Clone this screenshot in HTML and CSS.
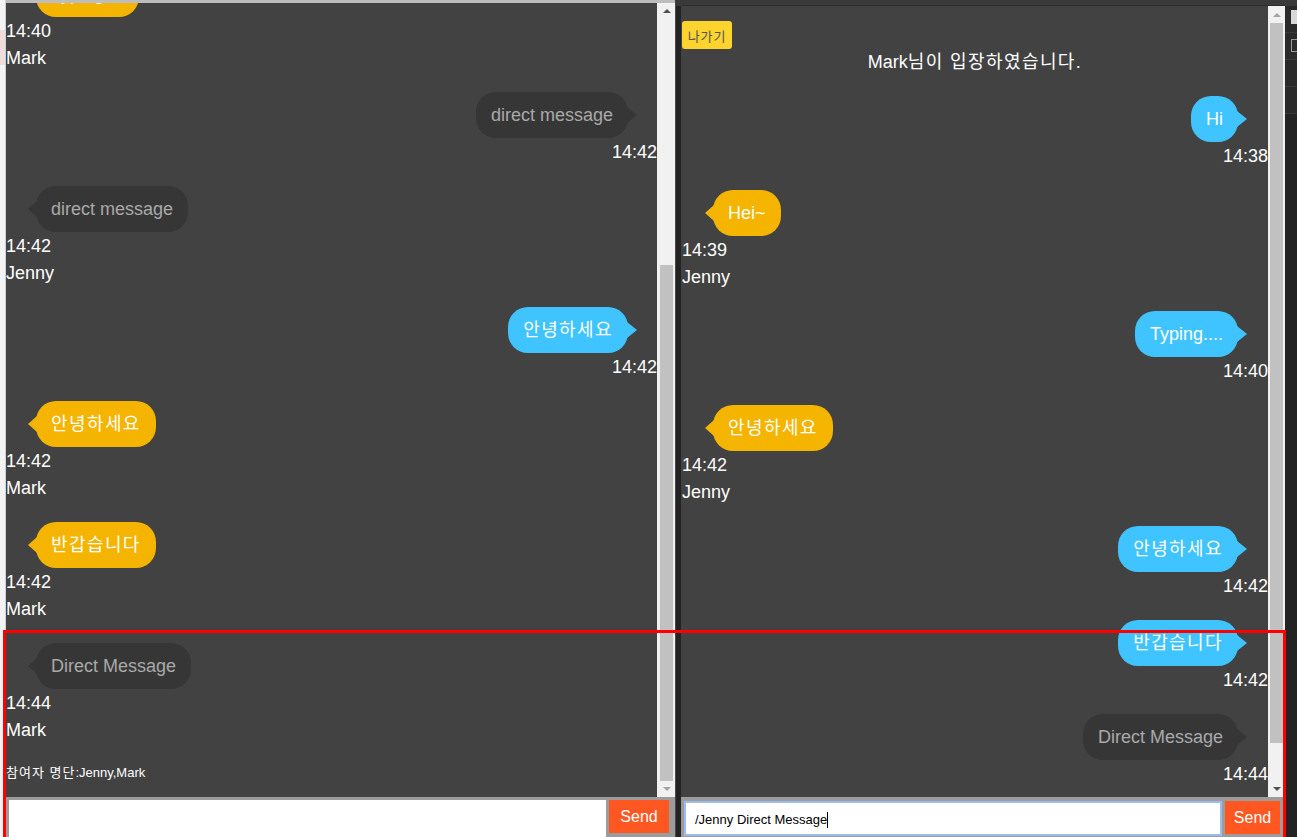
FILE: index.html
```html
<!DOCTYPE html>
<html lang="ko">
<head>
<meta charset="utf-8">
<title>Chat</title>
<link rel="stylesheet" href="styles.css">
</head>
<body>
<div class="screen">
  <div class="edge-left"><div class="edge-mark"></div></div>

  <section class="window window-left">
    <div class="pane">
      <div class="chat chat-left">
        <ul class="messages scrolled">
          <li class="msg other"><span class="bubble yellow">Typing....</span><div class="meta">14:40</div><div class="meta">Mark</div></li>
          <li class="msg mine"><span class="bubble gray">direct message</span><div class="meta">14:42</div></li>
          <li class="msg other"><span class="bubble gray">direct message</span><div class="meta">14:42</div><div class="meta">Jenny</div></li>
          <li class="msg mine"><span class="bubble blue"><span class="ko">안녕하세요</span></span><div class="meta">14:42</div></li>
          <li class="msg other"><span class="bubble yellow"><span class="ko">안녕하세요</span></span><div class="meta">14:42</div><div class="meta">Mark</div></li>
          <li class="msg other"><span class="bubble yellow"><span class="ko">반갑습니다</span></span><div class="meta">14:42</div><div class="meta">Mark</div></li>
          <li class="msg other"><span class="bubble gray">Direct Message</span><div class="meta">14:44</div><div class="meta">Mark</div></li>
        </ul>
        <p class="members"><span class="ko-sm">참여자 명단</span>:Jenny,Mark</p>
      </div>
      <div class="scrollbar scrollbar-left">
        <div class="arrow up dark"></div>
        <div class="track"><div class="thumb thumb-left"></div></div>
        <div class="arrow down"></div>
      </div>
    </div>
    <div class="composer composer-left">
      <div class="field"></div>
      <button class="send" type="button">Send</button>
    </div>
  </section>

  <div class="divider"></div>

  <section class="window window-right">
    <div class="topbar"></div>
    <div class="pane">
      <div class="chat chat-right">
        <button class="leave" type="button">나가기</button>
        <div class="notice">Mark<span class="ko">님이 입장하였습니다.</span></div>
        <ul class="messages">
          <li class="msg mine"><span class="bubble blue">Hi</span><div class="meta">14:38</div></li>
          <li class="msg other"><span class="bubble yellow">Hei~</span><div class="meta">14:39</div><div class="meta">Jenny</div></li>
          <li class="msg mine"><span class="bubble blue">Typing....</span><div class="meta">14:40</div></li>
          <li class="msg other"><span class="bubble yellow"><span class="ko">안녕하세요</span></span><div class="meta">14:42</div><div class="meta">Jenny</div></li>
          <li class="msg mine"><span class="bubble blue"><span class="ko">안녕하세요</span></span><div class="meta">14:42</div></li>
          <li class="msg mine"><span class="bubble blue"><span class="ko">반갑습니다</span></span><div class="meta">14:42</div></li>
          <li class="msg mine"><span class="bubble gray">Direct Message</span><div class="meta">14:44</div></li>
        </ul>
      </div>
      <div class="scrollbar scrollbar-right">
        <div class="arrow up"></div>
        <div class="track"><div class="thumb thumb-right"></div></div>
        <div class="arrow down dark"></div>
      </div>
    </div>
    <div class="composer composer-right">
      <div class="field focused">/Jenny Direct Message<span class="caret"></span></div>
      <button class="send" type="button">Send</button>
    </div>
  </section>

  <div class="edge-right">
    <div class="dev-row"><span class="dev-chip"></span></div>
    <div class="dev-row"><span class="dev-box"></span></div>
    <div class="dev-row"></div>
    <div class="dev-row"></div>
  </div>

  <div class="highlight"></div>
</div>
</body>
</html>
```

FILE: styles.css
```css
* { box-sizing: border-box; }

html, body {
  margin: 0;
  padding: 0;
}

body {
  width: 1297px;
  height: 837px;
  overflow: hidden;
  background: #424242;
  font-family: "Liberation Sans", "Noto Sans CJK KR", sans-serif;
  color: #fff;
}

.screen {
  position: relative;
  display: flex;
  width: 1297px;
  height: 837px;
}

/* outer edges */
.edge-left {
  width: 6px;
  background: #f3f3f3;
  border-right: 1px solid #d0d0d0;
  padding-top: 30px;
}
.edge-mark {
  height: 35px;
  background: #f1dcdc;
}

.divider {
  width: 6px;
  background: #232323;
  border-left: 1px solid #4a4a4a;
  border-top: 6px solid #3a3a3a;
}

.edge-right {
  width: 12px;
  background: #232323;
  border-top: 6px solid #3a3a3a;
  display: flex;
  flex-direction: column;
}
.dev-row {
  height: 27px;
  border-bottom: 1px solid #3a3a3a;
  background: #2a2a2a;
  padding: 4px 0 0 6px;
}
.dev-chip {
  display: block;
  width: 6px;
  height: 14px;
  background: #d8d8d8;
}
.dev-box {
  display: block;
  width: 8px;
  height: 13px;
  margin-top: 2px;
  border: 1px solid #9a9a9a;
}

/* windows */
.window {
  display: flex;
  flex-direction: column;
}
.window-left {
  width: 669px;
  border-top: 3px solid #bdbdbd;
}
.window-right {
  width: 604px;
}
.topbar {
  height: 6px;
  background: #3a3a3a;
  border-bottom: 1px solid #2c2c2c;
}

.pane {
  flex: 1;
  display: flex;
  min-height: 0;
}

.chat {
  flex: 1;
  overflow: hidden;
  background: #424242;
}
.chat-right {
  padding: 15px 0 0 1px;
}

/* messages */
.messages {
  list-style: none;
  margin: 0;
  padding: 0;
}
.messages.scrolled {
  margin-top: -32px;
}
.msg {
  margin-bottom: 21px;
}
.msg.mine {
  text-align: right;
}

.bubble {
  position: relative;
  display: inline-flex;
  align-items: center;
  height: 46px;
  padding: 0 15px;
  border-radius: 20px;
  font-size: 18px;
  line-height: 22px;
  white-space: nowrap;
}
.bubble::after {
  content: "";
  position: absolute;
  top: 50%;
  margin-top: -8px;
  width: 0;
  height: 0;
  border-top: 8px solid transparent;
  border-bottom: 8px solid transparent;
}
.msg.mine .bubble::after {
  right: -9px;
  border-left: 10px solid var(--bubble);
}
.msg.other .bubble::after {
  left: -8px;
  border-right: 9px solid var(--bubble);
}

.ko {
  letter-spacing: 1.4px;
}
.ko-sm {
  letter-spacing: 1px;
}

.chat-left .msg.other .bubble { margin-left: 30px; }
.chat-left .msg.mine .bubble { margin-right: 29px; }
.chat-right .msg.other .bubble { margin-left: 31px; }
.chat-right .msg.mine .bubble { margin-right: 30px; }

.yellow { --bubble: #f4b400; background: #f4b400; color: #fff; }
.blue { --bubble: #40c4ff; background: #40c4ff; color: #fff; }
.gray { --bubble: #363636; background: #363636; color: #a9a9a9; }

.meta {
  font-size: 18px;
  line-height: 25px;
  padding-top: 2px;
  color: #fff;
}

.members {
  margin: 0;
  font-size: 13px;
  line-height: 18px;
  color: #fff;
}

.leave {
  display: block;
  width: 50px;
  height: 28px;
  padding: 0;
  border: none;
  border-radius: 3px;
  background: #fdd32e;
  color: #555;
  font-family: "Liberation Sans", "Noto Sans CJK KR", sans-serif;
  font-size: 13px;
  letter-spacing: 0.8px;
}

.notice {
  text-align: center;
  font-size: 18px;
  line-height: 24px;
  padding-top: 1px;
  margin-bottom: 22px;
}

/* scrollbars */
.scrollbar {
  display: flex;
  flex-direction: column;
  background: #f1f1f1;
}
.scrollbar-left { width: 18px; padding-left: 1px; }
.scrollbar-right { width: 17px; }

.arrow {
  height: 17px;
  display: flex;
  align-items: center;
  justify-content: center;
}
.arrow::before {
  content: "";
  width: 0;
  height: 0;
  border-left: 4px solid transparent;
  border-right: 4px solid transparent;
}
.arrow.up::before { border-bottom: 4px solid #a3a3a3; }
.arrow.down::before { border-top: 4px solid #a3a3a3; }
.arrow.up.dark::before { border-bottom-color: #505050; }
.arrow.down.dark::before { border-top-color: #505050; }

.track {
  flex: 1;
  padding: 0 2px;
}
.thumb {
  background: #c1c1c1;
}
.thumb-left {
  margin-top: 245px;
  height: 516px;
}
.thumb-right {
  height: 720px;
}

/* composer */
.composer {
  height: 40px;
  display: flex;
  align-items: flex-start;
  gap: 3px;
  background: #9c9c9c;
}
.composer-left {
  padding: 3px 6px 0 3px;
}
.composer-right {
  padding: 4px 5px 0 3px;
}

.field {
  flex: 1;
  height: 37px;
  background: #fff;
  color: #000;
  font-size: 13px;
  line-height: 33px;
  padding: 0 9px;
  white-space: nowrap;
}
.field.focused {
  height: 35px;
  border: 2px solid #9dbcea;
}
.caret {
  display: inline-block;
  width: 1px;
  height: 16px;
  background: #000;
  vertical-align: middle;
  margin-top: -2px;
}

.send {
  height: 33px;
  border: none;
  padding: 0;
  background: #ff5722;
  color: #fff;
  font-family: "Liberation Sans", sans-serif;
  font-size: 16px;
}
.composer-left .send { width: 60px; }
.composer-right .send { width: 55px; }

/* annotation */
.highlight {
  position: absolute;
  left: 3px;
  top: 630px;
  width: 1283px;
  height: 230px;
  border: 3px solid #ff0000;
  pointer-events: none;
}
```
